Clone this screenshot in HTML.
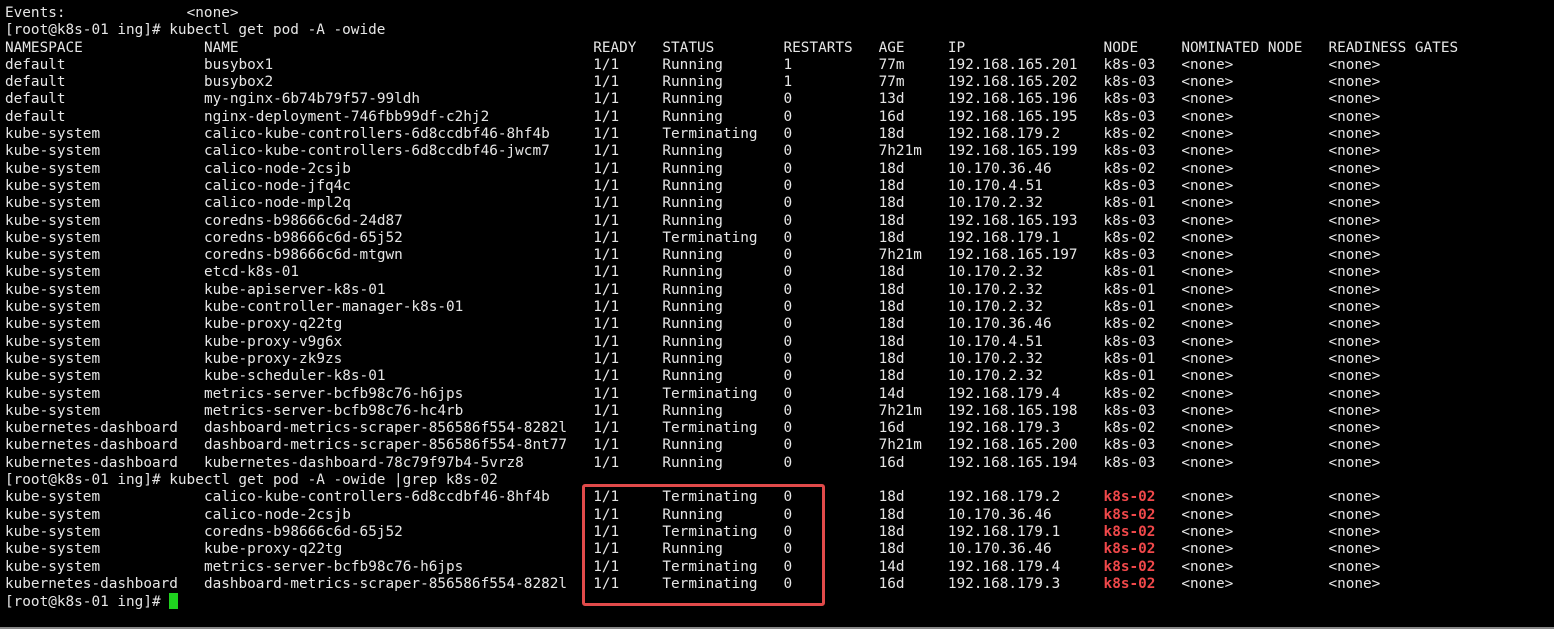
<!DOCTYPE html>
<html><head><meta charset="utf-8"><style>
body{margin:0;background:#000;width:1554px;height:629px;overflow:hidden;position:relative}
#t{position:absolute;left:5px;top:5px;font-family:"DejaVu Sans Mono","Liberation Mono",monospace;font-size:14.37px;color:#e6e6e6}
.r{position:relative;height:17.3px;line-height:17.3px;white-space:pre}
.r span{position:absolute;top:0}
.a{left:0}.b{left:198.95px}.c{left:588.2px}.d{left:657.4px}.e{left:778.5px}.f{left:873.65px}.g{left:942.85px}.h{left:1098.55px}.i{left:1176.4px}.j{left:1323.45px}
.red{color:#f0484a;font-weight:bold}
#box{position:absolute;left:582px;top:484px;width:237px;height:116px;border:3px solid #e04a4a;border-radius:3px}
#bar{position:absolute;left:0;bottom:0;width:1554px;height:2px;background:#888}
#cur{display:inline-block;width:8.6px;height:16px;background:#1fd11f;vertical-align:-3px}
</style></head><body>
<div id="t">
<div class="r"><span class="a">Events:</span><span style="left:181.65px">&lt;none&gt;</span></div>
<div class="r">[root@k8s-01 ing]# kubectl get pod -A -owide</div>
<div class="r"><span class="a">NAMESPACE</span><span class="b">NAME</span><span class="c">READY</span><span class="d">STATUS</span><span class="e">RESTARTS</span><span class="f">AGE</span><span class="g">IP</span><span class="h">NODE</span><span class="i">NOMINATED NODE</span><span class="j">READINESS GATES</span></div>
<div class="r"><span class="a">default</span><span class="b">busybox1</span><span class="c">1/1</span><span class="d">Running</span><span class="e">1</span><span class="f">77m</span><span class="g">192.168.165.201</span><span class="h">k8s-03</span><span class="i">&lt;none&gt;</span><span class="j">&lt;none&gt;</span></div>
<div class="r"><span class="a">default</span><span class="b">busybox2</span><span class="c">1/1</span><span class="d">Running</span><span class="e">1</span><span class="f">77m</span><span class="g">192.168.165.202</span><span class="h">k8s-03</span><span class="i">&lt;none&gt;</span><span class="j">&lt;none&gt;</span></div>
<div class="r"><span class="a">default</span><span class="b">my-nginx-6b74b79f57-99ldh</span><span class="c">1/1</span><span class="d">Running</span><span class="e">0</span><span class="f">13d</span><span class="g">192.168.165.196</span><span class="h">k8s-03</span><span class="i">&lt;none&gt;</span><span class="j">&lt;none&gt;</span></div>
<div class="r"><span class="a">default</span><span class="b">nginx-deployment-746fbb99df-c2hj2</span><span class="c">1/1</span><span class="d">Running</span><span class="e">0</span><span class="f">16d</span><span class="g">192.168.165.195</span><span class="h">k8s-03</span><span class="i">&lt;none&gt;</span><span class="j">&lt;none&gt;</span></div>
<div class="r"><span class="a">kube-system</span><span class="b">calico-kube-controllers-6d8ccdbf46-8hf4b</span><span class="c">1/1</span><span class="d">Terminating</span><span class="e">0</span><span class="f">18d</span><span class="g">192.168.179.2</span><span class="h">k8s-02</span><span class="i">&lt;none&gt;</span><span class="j">&lt;none&gt;</span></div>
<div class="r"><span class="a">kube-system</span><span class="b">calico-kube-controllers-6d8ccdbf46-jwcm7</span><span class="c">1/1</span><span class="d">Running</span><span class="e">0</span><span class="f">7h21m</span><span class="g">192.168.165.199</span><span class="h">k8s-03</span><span class="i">&lt;none&gt;</span><span class="j">&lt;none&gt;</span></div>
<div class="r"><span class="a">kube-system</span><span class="b">calico-node-2csjb</span><span class="c">1/1</span><span class="d">Running</span><span class="e">0</span><span class="f">18d</span><span class="g">10.170.36.46</span><span class="h">k8s-02</span><span class="i">&lt;none&gt;</span><span class="j">&lt;none&gt;</span></div>
<div class="r"><span class="a">kube-system</span><span class="b">calico-node-jfq4c</span><span class="c">1/1</span><span class="d">Running</span><span class="e">0</span><span class="f">18d</span><span class="g">10.170.4.51</span><span class="h">k8s-03</span><span class="i">&lt;none&gt;</span><span class="j">&lt;none&gt;</span></div>
<div class="r"><span class="a">kube-system</span><span class="b">calico-node-mpl2q</span><span class="c">1/1</span><span class="d">Running</span><span class="e">0</span><span class="f">18d</span><span class="g">10.170.2.32</span><span class="h">k8s-01</span><span class="i">&lt;none&gt;</span><span class="j">&lt;none&gt;</span></div>
<div class="r"><span class="a">kube-system</span><span class="b">coredns-b98666c6d-24d87</span><span class="c">1/1</span><span class="d">Running</span><span class="e">0</span><span class="f">18d</span><span class="g">192.168.165.193</span><span class="h">k8s-03</span><span class="i">&lt;none&gt;</span><span class="j">&lt;none&gt;</span></div>
<div class="r"><span class="a">kube-system</span><span class="b">coredns-b98666c6d-65j52</span><span class="c">1/1</span><span class="d">Terminating</span><span class="e">0</span><span class="f">18d</span><span class="g">192.168.179.1</span><span class="h">k8s-02</span><span class="i">&lt;none&gt;</span><span class="j">&lt;none&gt;</span></div>
<div class="r"><span class="a">kube-system</span><span class="b">coredns-b98666c6d-mtgwn</span><span class="c">1/1</span><span class="d">Running</span><span class="e">0</span><span class="f">7h21m</span><span class="g">192.168.165.197</span><span class="h">k8s-03</span><span class="i">&lt;none&gt;</span><span class="j">&lt;none&gt;</span></div>
<div class="r"><span class="a">kube-system</span><span class="b">etcd-k8s-01</span><span class="c">1/1</span><span class="d">Running</span><span class="e">0</span><span class="f">18d</span><span class="g">10.170.2.32</span><span class="h">k8s-01</span><span class="i">&lt;none&gt;</span><span class="j">&lt;none&gt;</span></div>
<div class="r"><span class="a">kube-system</span><span class="b">kube-apiserver-k8s-01</span><span class="c">1/1</span><span class="d">Running</span><span class="e">0</span><span class="f">18d</span><span class="g">10.170.2.32</span><span class="h">k8s-01</span><span class="i">&lt;none&gt;</span><span class="j">&lt;none&gt;</span></div>
<div class="r"><span class="a">kube-system</span><span class="b">kube-controller-manager-k8s-01</span><span class="c">1/1</span><span class="d">Running</span><span class="e">0</span><span class="f">18d</span><span class="g">10.170.2.32</span><span class="h">k8s-01</span><span class="i">&lt;none&gt;</span><span class="j">&lt;none&gt;</span></div>
<div class="r"><span class="a">kube-system</span><span class="b">kube-proxy-q22tg</span><span class="c">1/1</span><span class="d">Running</span><span class="e">0</span><span class="f">18d</span><span class="g">10.170.36.46</span><span class="h">k8s-02</span><span class="i">&lt;none&gt;</span><span class="j">&lt;none&gt;</span></div>
<div class="r"><span class="a">kube-system</span><span class="b">kube-proxy-v9g6x</span><span class="c">1/1</span><span class="d">Running</span><span class="e">0</span><span class="f">18d</span><span class="g">10.170.4.51</span><span class="h">k8s-03</span><span class="i">&lt;none&gt;</span><span class="j">&lt;none&gt;</span></div>
<div class="r"><span class="a">kube-system</span><span class="b">kube-proxy-zk9zs</span><span class="c">1/1</span><span class="d">Running</span><span class="e">0</span><span class="f">18d</span><span class="g">10.170.2.32</span><span class="h">k8s-01</span><span class="i">&lt;none&gt;</span><span class="j">&lt;none&gt;</span></div>
<div class="r"><span class="a">kube-system</span><span class="b">kube-scheduler-k8s-01</span><span class="c">1/1</span><span class="d">Running</span><span class="e">0</span><span class="f">18d</span><span class="g">10.170.2.32</span><span class="h">k8s-01</span><span class="i">&lt;none&gt;</span><span class="j">&lt;none&gt;</span></div>
<div class="r"><span class="a">kube-system</span><span class="b">metrics-server-bcfb98c76-h6jps</span><span class="c">1/1</span><span class="d">Terminating</span><span class="e">0</span><span class="f">14d</span><span class="g">192.168.179.4</span><span class="h">k8s-02</span><span class="i">&lt;none&gt;</span><span class="j">&lt;none&gt;</span></div>
<div class="r"><span class="a">kube-system</span><span class="b">metrics-server-bcfb98c76-hc4rb</span><span class="c">1/1</span><span class="d">Running</span><span class="e">0</span><span class="f">7h21m</span><span class="g">192.168.165.198</span><span class="h">k8s-03</span><span class="i">&lt;none&gt;</span><span class="j">&lt;none&gt;</span></div>
<div class="r"><span class="a">kubernetes-dashboard</span><span class="b">dashboard-metrics-scraper-856586f554-8282l</span><span class="c">1/1</span><span class="d">Terminating</span><span class="e">0</span><span class="f">16d</span><span class="g">192.168.179.3</span><span class="h">k8s-02</span><span class="i">&lt;none&gt;</span><span class="j">&lt;none&gt;</span></div>
<div class="r"><span class="a">kubernetes-dashboard</span><span class="b">dashboard-metrics-scraper-856586f554-8nt77</span><span class="c">1/1</span><span class="d">Running</span><span class="e">0</span><span class="f">7h21m</span><span class="g">192.168.165.200</span><span class="h">k8s-03</span><span class="i">&lt;none&gt;</span><span class="j">&lt;none&gt;</span></div>
<div class="r"><span class="a">kubernetes-dashboard</span><span class="b">kubernetes-dashboard-78c79f97b4-5vrz8</span><span class="c">1/1</span><span class="d">Running</span><span class="e">0</span><span class="f">16d</span><span class="g">192.168.165.194</span><span class="h">k8s-03</span><span class="i">&lt;none&gt;</span><span class="j">&lt;none&gt;</span></div>
<div class="r">[root@k8s-01 ing]# kubectl get pod -A -owide |grep k8s-02</div>
<div class="r"><span class="a">kube-system</span><span class="b">calico-kube-controllers-6d8ccdbf46-8hf4b</span><span class="c">1/1</span><span class="d">Terminating</span><span class="e">0</span><span class="f">18d</span><span class="g">192.168.179.2</span><span class="h red">k8s-02</span><span class="i">&lt;none&gt;</span><span class="j">&lt;none&gt;</span></div>
<div class="r"><span class="a">kube-system</span><span class="b">calico-node-2csjb</span><span class="c">1/1</span><span class="d">Running</span><span class="e">0</span><span class="f">18d</span><span class="g">10.170.36.46</span><span class="h red">k8s-02</span><span class="i">&lt;none&gt;</span><span class="j">&lt;none&gt;</span></div>
<div class="r"><span class="a">kube-system</span><span class="b">coredns-b98666c6d-65j52</span><span class="c">1/1</span><span class="d">Terminating</span><span class="e">0</span><span class="f">18d</span><span class="g">192.168.179.1</span><span class="h red">k8s-02</span><span class="i">&lt;none&gt;</span><span class="j">&lt;none&gt;</span></div>
<div class="r"><span class="a">kube-system</span><span class="b">kube-proxy-q22tg</span><span class="c">1/1</span><span class="d">Running</span><span class="e">0</span><span class="f">18d</span><span class="g">10.170.36.46</span><span class="h red">k8s-02</span><span class="i">&lt;none&gt;</span><span class="j">&lt;none&gt;</span></div>
<div class="r"><span class="a">kube-system</span><span class="b">metrics-server-bcfb98c76-h6jps</span><span class="c">1/1</span><span class="d">Terminating</span><span class="e">0</span><span class="f">14d</span><span class="g">192.168.179.4</span><span class="h red">k8s-02</span><span class="i">&lt;none&gt;</span><span class="j">&lt;none&gt;</span></div>
<div class="r"><span class="a">kubernetes-dashboard</span><span class="b">dashboard-metrics-scraper-856586f554-8282l</span><span class="c">1/1</span><span class="d">Terminating</span><span class="e">0</span><span class="f">16d</span><span class="g">192.168.179.3</span><span class="h red">k8s-02</span><span class="i">&lt;none&gt;</span><span class="j">&lt;none&gt;</span></div>
<div class="r">[root@k8s-01 ing]# <span id="cur" style="position:static"></span></div>
</div>
<div id="box"></div>
<div id="bar"></div>
</body></html>
